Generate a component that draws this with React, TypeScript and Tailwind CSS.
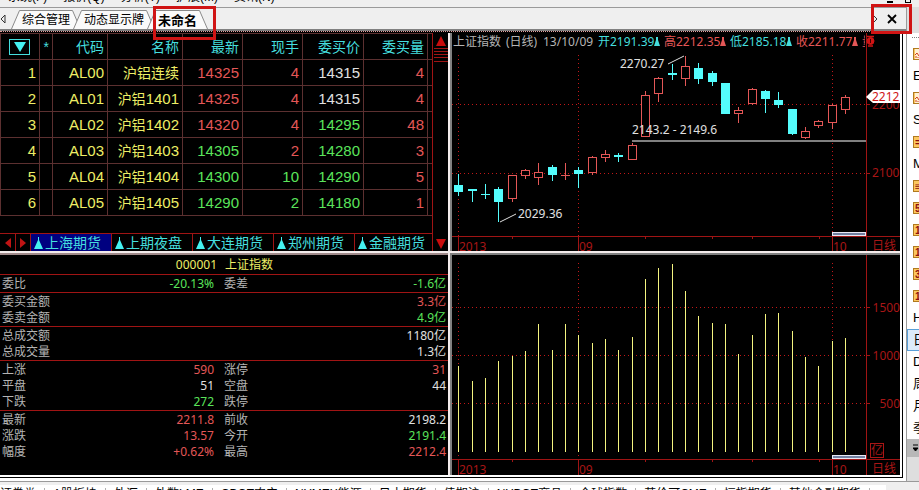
import { useState } from 'react';

type Tone = 'red' | 'green' | 'white' | 'yellow';

interface Quote {
  code: string;
  name: string;
  month: string;
  last: string;
  lastTone: Tone;
  volume: string;
  volumeTone: Tone;
  bid: string;
  bidTone: Tone;
  bidSize: string;
}

interface InfoItem {
  label: string;
  value: string;
  tone: Tone;
}

interface Candle {
  high: number;
  top: number;
  bottom: number;
  low: number;
  up: boolean;
}

const toneClass: Record<Tone, string> = {
  red: 'text-[#e45757]',
  green: 'text-[#5be45b]',
  white: 'text-[#e0e0e0]',
  yellow: 'text-[#eeee66]',
};

const quotes: Quote[] = [
  { code: 'AL00', name: '沪铝连续', month: '', last: '14325', lastTone: 'red', volume: '4', volumeTone: 'red', bid: '14315', bidTone: 'white', bidSize: '4' },
  { code: 'AL01', name: '沪铝', month: '1401', last: '14325', lastTone: 'red', volume: '4', volumeTone: 'red', bid: '14315', bidTone: 'white', bidSize: '4' },
  { code: 'AL02', name: '沪铝', month: '1402', last: '14320', lastTone: 'red', volume: '4', volumeTone: 'red', bid: '14295', bidTone: 'green', bidSize: '48' },
  { code: 'AL03', name: '沪铝', month: '1403', last: '14305', lastTone: 'green', volume: '2', volumeTone: 'red', bid: '14280', bidTone: 'green', bidSize: '3' },
  { code: 'AL04', name: '沪铝', month: '1404', last: '14300', lastTone: 'green', volume: '10', volumeTone: 'green', bid: '14290', bidTone: 'green', bidSize: '5' },
  { code: 'AL05', name: '沪铝', month: '1405', last: '14290', lastTone: 'green', volume: '2', volumeTone: 'green', bid: '14180', bidTone: 'green', bidSize: '1' },
];

const markets = ['上海期货', '上期夜盘', '大连期货', '郑州期货', '金融期货'];

// each group is closed by a red rule
const infoGroups: InfoItem[][][] = [
  [[{ label: '委比', value: '-20.13%', tone: 'green' }, { label: '委差', value: '-1.6亿', tone: 'green' }]],
  [
    [{ label: '委买金额', value: '3.3亿', tone: 'red' }],
    [{ label: '委卖金额', value: '4.9亿', tone: 'green' }],
  ],
  [
    [{ label: '总成交额', value: '1180亿', tone: 'white' }],
    [{ label: '总成交量', value: '1.3亿', tone: 'white' }],
  ],
  [
    [{ label: '上涨', value: '590', tone: 'red' }, { label: '涨停', value: '31', tone: 'red' }],
    [{ label: '平盘', value: '51', tone: 'white' }, { label: '空盘', value: '44', tone: 'white' }],
    [{ label: '下跌', value: '272', tone: 'green' }, { label: '跌停', value: '', tone: 'green' }],
  ],
  [
    [{ label: '最新', value: '2211.8', tone: 'red' }, { label: '前收', value: '2198.2', tone: 'white' }],
    [{ label: '涨跌', value: '13.57', tone: 'red' }, { label: '今开', value: '2191.4', tone: 'green' }],
    [{ label: '幅度', value: '+0.62%', tone: 'red' }, { label: '最高', value: '2212.4', tone: 'red' }],
  ],
];

const candles: Candle[] = [
  { high: 141, top: 152, bottom: 159, low: 163, up: false },
  { high: 156, top: 156, bottom: 158, low: 169, up: false },
  { high: 151, top: 161, bottom: 162, low: 166, up: false },
  { high: 154, top: 156, bottom: 169, low: 189, up: false },
  { high: 142, top: 142, bottom: 166, low: 169, up: true },
  { high: 136, top: 137, bottom: 143, low: 146, up: true },
  { high: 130, top: 139, bottom: 145, low: 152, up: true },
  { high: 132, top: 134, bottom: 142, low: 148, up: false },
  { high: 130, top: 142, bottom: 143, low: 147, up: true },
  { high: 134, top: 137, bottom: 141, low: 155, up: false },
  { high: 123, top: 124, bottom: 140, low: 142, up: true },
  { high: 117, top: 121, bottom: 125, low: 129, up: true },
  { high: 120, top: 122, bottom: 124, low: 129, up: false },
  { high: 110, top: 112, bottom: 127, low: 127, up: true },
  { high: 58, top: 62, bottom: 104, low: 104, up: true },
  { high: 44, top: 45, bottom: 61, low: 69, up: true },
  { high: 31, top: 40, bottom: 42, low: 47, up: false },
  { high: 23, top: 33, bottom: 46, low: 53, up: true },
  { high: 30, top: 35, bottom: 46, low: 51, up: false },
  { high: 38, top: 40, bottom: 49, low: 53, up: false },
  { high: 50, top: 50, bottom: 81, low: 81, up: false },
  { high: 74, top: 77, bottom: 81, low: 90, up: true },
  { high: 55, top: 56, bottom: 71, low: 72, up: true },
  { high: 57, top: 58, bottom: 66, low: 80, up: false },
  { high: 59, top: 67, bottom: 72, low: 75, up: false },
  { high: 76, top: 76, bottom: 101, low: 102, up: false },
  { high: 94, top: 98, bottom: 105, low: 106, up: true },
  { high: 87, top: 88, bottom: 93, low: 95, up: true },
  { high: 71, top: 72, bottom: 90, low: 96, up: true },
  { high: 62, top: 64, bottom: 77, low: 81, up: true },
];

const volumeTops = [
  111, 126, 123, 106, 101, 96, 69, 95, 69, 80, 88, 84, 95, 82, 24, 13, 9, 36, 61, 68, 69, 99, 80, 59, 58, 76, 102, 111, 86, 83,
];

const menus = ['系统(F)', '报价(Q)', '分析(T)', '扩展(M)', '资讯(N)'];

const boards = [
  '证券类', 'A股板块', '外汇', '外数LME', 'CBOT农产', 'NYMEX能源', '日本期货', '债期沪',
  'NYBOT商品', '全球指数', '英伦可CME', '恒指期货', '其他金融期货',
];

const periods = ['~', 'E', '~', 'S', '=', 'M', '≡', '5', '10', '11', '3', '1', 'H', '日', 'D', '周', '月', '季'];
const iconPeriods = [0, 2, 4, 6, 7, 8, 9, 10, 11];

const dayX = (i: number) => Math.floor(6.7 + 13.34 * i);

const Slope = ({ flip = false }: { flip?: boolean }) => (
  <svg viewBox="0 0 10 19" className="h-[19px] w-[10px] shrink-0">
    <path d={flip ? 'M0 .5H1.5L9.5 19H0Z' : 'M10 .5H8.5L.5 19H10Z'} fill="#fafafa" />
    <path d={flip ? 'M0 .5H1.5L9.5 19' : 'M10 .5H8.5L.5 19'} fill="none" stroke="#8a8a8a" />
  </svg>
);

const Tabs = () => {
  const [active, setActive] = useState('未命名');

  return (
    <nav className="flex h-[22px] items-end border-t border-[#9a9a9a] bg-[#efefef] text-xs">
      <button aria-label="向左" className="flex h-full w-[11px] items-center">
        <svg viewBox="0 0 6 10" className="h-[10px] w-[6px]">
          <path d="M5 1L1 5L5 9Z" fill="none" stroke="#333" />
        </svg>
      </button>
      {['综合管理', '动态显示牌', '未命名'].map((tab, i) => (
        <button
          key={tab}
          onClick={() => setActive(tab)}
          className={`relative flex text-black ${i > 0 ? '-ml-2' : ''} ${active === tab ? 'text-[13px] font-bold' : ''}`}
        >
          <Slope />
          <span className="h-[19px] border-t border-[#8a8a8a] bg-[#fafafa] px-px leading-[19px]">{tab}</span>
          <Slope flip />
          {tab === '未命名' && <span className="absolute -top-[4px] left-[6px] z-10 h-[34px] w-[63px] border-3 border-[#d01414]" />}
        </button>
      ))}
      <div className="relative ml-auto flex h-full w-[35px] items-center">
        <svg viewBox="0 0 5 8" className="ml-[2px] h-2 w-[5px]">
          <path d="M1 1L4 4L1 7" fill="none" stroke="#333" />
        </svg>
        <button aria-label="关闭" className="ml-[9px]">
          <svg viewBox="0 0 10 10" className="size-[10px]">
            <path d="M1 1L9 9M9 1L1 9" stroke="#000" strokeWidth="1.8" />
          </svg>
        </button>
        <span className="absolute -top-1 left-0 z-10 h-[30px] w-[41px] border-3 border-[#d01414]" />
      </div>
    </nav>
  );
};

const QuoteTable = () => {
  const cell = 'border-b border-l border-[#5c3030] py-0 pl-0 pr-[3px] text-right font-normal';

  return (
    <table className="w-full table-fixed border-separate border-spacing-0 border-t border-[#5c3030] text-[15px] leading-5">
      <colgroup>
        <col className="w-[39px]" />
        <col className="w-[13px]" />
        <col className="w-[55px]" />
        <col className="w-[75px]" />
        <col className="w-[60px]" />
        <col className="w-[60px]" />
        <col className="w-[61px]" />
        <col className="w-[64px]" />
        <col className="w-[5px]" />
      </colgroup>
      <thead>
        <tr className="h-[26px] text-sm text-[#45dede]">
          <th className={cell}>
            <button aria-label="筛选" className="ml-2 flex h-4 w-[21px] items-center justify-center border border-[#45dede]">
              <svg viewBox="0 0 12 10" className="h-[10px] w-3">
                <path d="M0 0H12L6 10Z" fill="#45f0f0" />
              </svg>
            </button>
          </th>
          <th className={cell}>*</th>
          {['代码', '名称', '最新', '现手', '委买价', '委买量'].map((title) => (
            <th key={title} className={cell}>{title}</th>
          ))}
          <th className={cell} />
        </tr>
      </thead>
      <tbody>
        {quotes.map((q, i) => (
          <tr key={q.code} className={`h-[26px] ${toneClass.yellow}`}>
            <td className={cell}>{i + 1}</td>
            <td className={cell} />
            <td className={cell}>{q.code}</td>
            <td className={cell}>
              <span className="text-sm">{q.name}</span>
              {q.month}
            </td>
            <td className={`${cell} ${toneClass[q.lastTone]}`}>{q.last}</td>
            <td className={`${cell} ${toneClass[q.volumeTone]}`}>{q.volume}</td>
            <td className={`${cell} ${toneClass[q.bidTone]}`}>{q.bid}</td>
            <td className={`${cell} ${toneClass.red}`}>{q.bidSize}</td>
            <td className={cell} />
          </tr>
        ))}
      </tbody>
    </table>
  );
};

const QuotePanel = () => {
  const [market, setMarket] = useState(markets[0]);

  return (
    <section className="flex min-h-0 bg-black">
      <div className="flex min-w-0 flex-1 flex-col justify-between overflow-hidden">
        <QuoteTable />
        <div className="flex h-[18px] shrink-0 border-t border-[#a01414] text-sm leading-4 text-[#45dede]">
          <button aria-label="上一页" className="flex w-[15px] shrink-0 items-center justify-center">
            <svg viewBox="0 0 6 10" className="h-[10px] w-[6px]"><path d="M6 0V10L0 5Z" fill="#c01414" /></svg>
          </button>
          <button aria-label="下一页" className="flex w-[15px] shrink-0 items-center justify-center border-l border-[#a01414]">
            <svg viewBox="0 0 6 10" className="h-[10px] w-[6px]"><path d="M0 0V10L6 5Z" fill="#c01414" /></svg>
          </button>
          {markets.map((m) => (
            <button
              key={m}
              onClick={() => setMarket(m)}
              className={`flex w-[81px] shrink-0 items-center gap-[2px] border-l border-[#a01414] pl-[3px] whitespace-nowrap ${market === m ? 'bg-[#000080]' : ''}`}
            >
              <svg viewBox="0 0 9 12" className="h-3 w-[9px] shrink-0">
                <path d="M4 0H5V3L9 12H0L4 3Z" fill="#45f0f0" />
              </svg>
              {m}
            </button>
          ))}
        </div>
      </div>
      <div className="flex w-4 shrink-0 flex-col items-center justify-between border-l border-[#a01414] pt-[3px] pb-[2px]">
        <svg viewBox="0 0 14 26" className="h-[26px] w-[14px]">
          <path d="M7 0L12 10H2Z" fill="#c80c0c" />
          <path d="M0 12.5H14M0 15.5H14M0 18.5H14M0 21.5H14M0 25.5H14" stroke="#a01414" />
        </svg>
        <svg viewBox="0 0 10 10" className="size-[10px]">
          <path d="M0 0H10L5 10Z" fill="#c80c0c" />
        </svg>
      </div>
    </section>
  );
};

const InfoPanel = () => (
  <section className="min-h-0 overflow-hidden border-t-2 border-[#a08a8a] bg-black text-xs leading-4">
    <h2 className={`grid h-5 grid-cols-[217fr_223fr] gap-2 border-b border-[#a01414] pt-[2px] ${toneClass.yellow}`}>
      <span className="text-right">000001</span>
      <span>上证指数</span>
    </h2>
    {infoGroups.map((group, g) => (
      <dl key={g} className={`pt-px ${g < infoGroups.length - 1 ? 'border-b border-[#a01414]' : ''}`}>
        {group.map((row) => (
          <div key={row[0].label} className={`grid px-[2px] ${row.length > 1 ? 'grid-cols-[212fr_222fr] gap-[10px]' : ''}`}>
            {row.map((item) => (
              <div key={item.label} className="flex h-4 justify-between">
                <dt className="text-[#b4b4b4]">{item.label}</dt>
                <dd className={toneClass[item.tone]}>{item.value}</dd>
              </div>
            ))}
          </div>
        ))}
      </dl>
    ))}
  </section>
);

interface FrameProps {
  axisY: number;
  gridTop: number;
  grid: number[];
}

// month lines, price lines and the two axes shared by both charts
const ChartFrame = ({ axisY, gridTop, grid }: FrameProps) => (
  <g stroke="#a01414" fill="none" shapeRendering="crispEdges">
    {[6, 126, 380].map((x) => (
      <g key={x}>
        <path d={`M${x}.5 ${gridTop}V${axisY}`} strokeDasharray="1 3" stroke="#c01818" />
        <path d={`M${x}.5 ${axisY}V220`} />
      </g>
    ))}
    {grid.map((y) => (
      <g key={y}>
        <path d={`M0 ${y}.5H414`} strokeDasharray="1 3" stroke="#c01818" />
        <path d={`M414 ${y}.5H418`} />
      </g>
    ))}
    {[60, 193, 260, 300, 367].map((x) => (
      <path key={x} d={`M${x}.5 ${axisY}v3`} />
    ))}
    <path d={`M0 ${axisY}.5H448M414.5 0V220`} />
    <path d={`M380.5 ${axisY - 4}.5H413.5V${axisY - 1}.5H380.5Z`} fill="#7080a0" stroke="#e8e8f4" />
  </g>
);

const headline = [
  { x: 146, text: '开2191.39', color: '#45dede' },
  { x: 212, text: '高2212.35', color: '#e45757' },
  { x: 278, text: '低2185.18', color: '#45dede' },
  { x: 344, text: '收2211.77', color: '#e45757' },
];

const PriceChart = () => (
  <section className="min-h-0 border-l-2 border-[#808080] bg-black">
    <svg viewBox="0 0 448 218" className="block h-full w-full text-xs">
      <ChartFrame axisY={203} gridTop={22} grid={[71, 140]} />
      <text x="1" y="13" fill="#b4b4b4">上证指数</text>
      <text x="54" y="13" fill="#b4b4b4">(日线)</text>
      <text x="91" y="13" fill="#b4b4b4">13/10/09</text>
      {headline.map((h) => (
        <g key={h.text} fill={h.color}>
          <text x={h.x} y="13">{h.text}</text>
          <path d={`M${h.x + 58} 4h2v3l2 6h-6l2-6z`} />
        </g>
      ))}
      <svg x="409" width="4" height="16"><text x="1" y="13" fill="#e45757">量</text></svg>
      <g fill="#d01414" stroke="#d01414">
        <circle cx="418.5" cy="8" r="3.5" />
        <path d="M415 3.5H422M416 13H421" strokeWidth="1.5" />
        <path d="M418.5 6V10" stroke="#400" />
      </g>
      <g shapeRendering="crispEdges">
        {candles.map((c, i) => {
          const x = dayX(i);
          const color = c.up ? '#e45757' : '#54fcfc';
          const h = c.bottom - c.top;
          return (
            <g key={i} fill={color}>
              <rect x={x} y={c.high} width="1" height={c.low - c.high} />
              {c.up && h > 1 ? (
                <rect x={x - 3.5} y={c.top + 0.5} width="8" height={h - 1} fill="#000" stroke={color} />
              ) : (
                <rect x={x - 4} y={c.top} width="9" height={h} />
              )}
            </g>
          );
        })}
        <rect x="180" y="107" width="234" height="2" fill="#808080" />
      </g>
      <path d="M216 31L232 23M48 189L64 181" stroke="#e0e0e0" />
      <g fill="#e0e0e0">
        <text x="168" y="35">2270.27</text>
        <text x="180" y="101">2143.2 - 2149.6</text>
        <text x="66" y="185">2029.36</text>
      </g>
      <g fill="#a81616">
        <text x="420" y="76">2200</text>
        <text x="420" y="144">2100</text>
        <text x="7" y="218">2013</text>
        <text x="127" y="218">09</text>
        <text x="381" y="218">10</text>
        <text x="420" y="217">日线</text>
      </g>
      <path d="M414 64L421 57H448V70H421Z" fill="#fff" />
      <text x="420" y="68" fill="#d01414">2212</text>
    </svg>
  </section>
);

const VolumeChart = () => (
  <section className="min-h-0 border-t-2 border-l-2 border-[#808080] bg-black">
    <svg viewBox="0 0 448 220" className="block h-full w-full text-xs">
      <ChartFrame axisY={204} gridTop={8} grid={[52, 100, 148]} />
      <g fill="#f4f480" shapeRendering="crispEdges">
        {volumeTops.map((y, i) => (
          <rect key={i} x={dayX(i)} y={y} width="1" height={197 - y} />
        ))}
      </g>
      <g fill="#a81616">
        <text x="448" y="57" textAnchor="end">1500</text>
        <text x="448" y="105" textAnchor="end">1000</text>
        <text x="448" y="153" textAnchor="end">500</text>
        <text x="419" y="200">亿</text>
        <text x="7" y="219">2013</text>
        <text x="127" y="219">09</text>
        <text x="381" y="219">10</text>
        <text x="420" y="218">日线</text>
      </g>
      <rect x="418.5" y="188.5" width="13" height="14" fill="none" stroke="#a81616" />
    </svg>
  </section>
);

const Sidebar = () => (
  <aside className="flex w-[13px] shrink-0 flex-col overflow-hidden border-l border-[#9a9a9a] bg-white text-[13px]">
    <div className="h-[26px] shrink-0 bg-[#dedede]" />
    <div className="mt-1 mb-[5px] ml-[5px] h-px shrink-0 border-t border-dotted border-[#808080]" />
    {periods.map((p, i) => (
      <button
        key={i}
        className={`flex h-[22px] shrink-0 items-center whitespace-nowrap text-black ${p === '日' ? 'border border-r-0 border-[#5aa0d8] bg-[#dcebfa] pl-[5px]' : 'pl-[6px]'}`}
      >
        {iconPeriods.includes(i) ? (
          <span className="flex h-3 w-[14px] shrink-0 items-center border border-[#b07a20] bg-[#fcc860] pl-px text-[10px] font-bold text-[#8c1010]">
            {i < 3 ? (
              <svg viewBox="0 0 10 10" className="size-[10px] shrink-0">
                <path d="M0 0H10V10H0Z" fill="#fff0d0" />
                <path d="M0 6L2 4L4 7L7 3M1 9V7M3 9V8" fill="none" stroke="#d04020" />
              </svg>
            ) : p}
          </span>
        ) : p}
      </button>
    ))}
    <button aria-label="更多" className="flex h-[18px] shrink-0 items-center bg-[#b8b8b8] pl-[6px]">
      <svg viewBox="0 0 6 8" className="h-2 w-[6px]"><path d="M0 1H5M0 4H5L2.5 7Z" stroke="#000" /></svg>
    </button>
    <div className="flex-1 bg-[#dedede]" />
  </aside>
);

const App = () => {
  return (
    <div className="flex h-screen flex-col overflow-hidden bg-[#e8e8e8] font-['Liberation_Sans','Noto_Sans_CJK_SC',sans-serif]">
      <header className="flex h-[7px] shrink-0 items-end gap-4 overflow-hidden bg-[#efefef] pb-[4px] pl-2 text-xs leading-3">
        {menus.map((m) => (
          <button key={m} className="whitespace-nowrap text-black">{m}</button>
        ))}
        <span className="ml-auto h-[2px] w-[6px] bg-black" />
        <span className="mr-2 -ml-1 h-[3px] w-[6px] border border-t-0 border-black" />
      </header>

      <div className="flex min-h-0 flex-1">
        <main className="flex min-w-0 flex-1 flex-col">
          <Tabs />
          <div className="h-[4px] shrink-0 border-t-2 border-[#808080] bg-black">
            <div className="border-t border-dotted border-[#e0a0a0]" />
          </div>
          <div className="flex min-h-0 flex-1 bg-white pr-[3px] pb-[3px]">
            <div className="flex min-w-0 flex-1 border-r border-b border-black bg-white pr-[2px] pb-[2px]">
              <div className="grid min-w-0 flex-1 grid-cols-[minmax(0,448fr)_minmax(0,450fr)] grid-rows-[minmax(0,218fr)_minmax(0,222fr)] gap-[2px] bg-[#f4ecec]">
                <QuotePanel />
                <div className="grid min-h-0 font-['Noto_Sans','Noto_Sans_CJK_SC',sans-serif]">
                  <PriceChart />
                </div>
                <div className="grid min-h-0 font-['Noto_Sans','Noto_Sans_CJK_SC',sans-serif]">
                  <InfoPanel />
                </div>
                <div className="grid min-h-0 font-['Noto_Sans','Noto_Sans_CJK_SC',sans-serif]">
                  <VolumeChart />
                </div>
              </div>
            </div>
          </div>
        </main>
        <Sidebar />
      </div>

      <footer className="h-[9px] shrink-0 overflow-hidden border-t border-[#9a9a9a] bg-[#efefef] pt-[3px]">
        <div className="-ml-2 flex w-fit bg-white pt-[3px] pr-4 text-xs leading-3">
          {boards.map((b) => (
            <button key={b} className="border-r border-[#b0b0b0] px-2 whitespace-nowrap text-black">{b}</button>
          ))}
        </div>
      </footer>
    </div>
  );
};

export default App;
